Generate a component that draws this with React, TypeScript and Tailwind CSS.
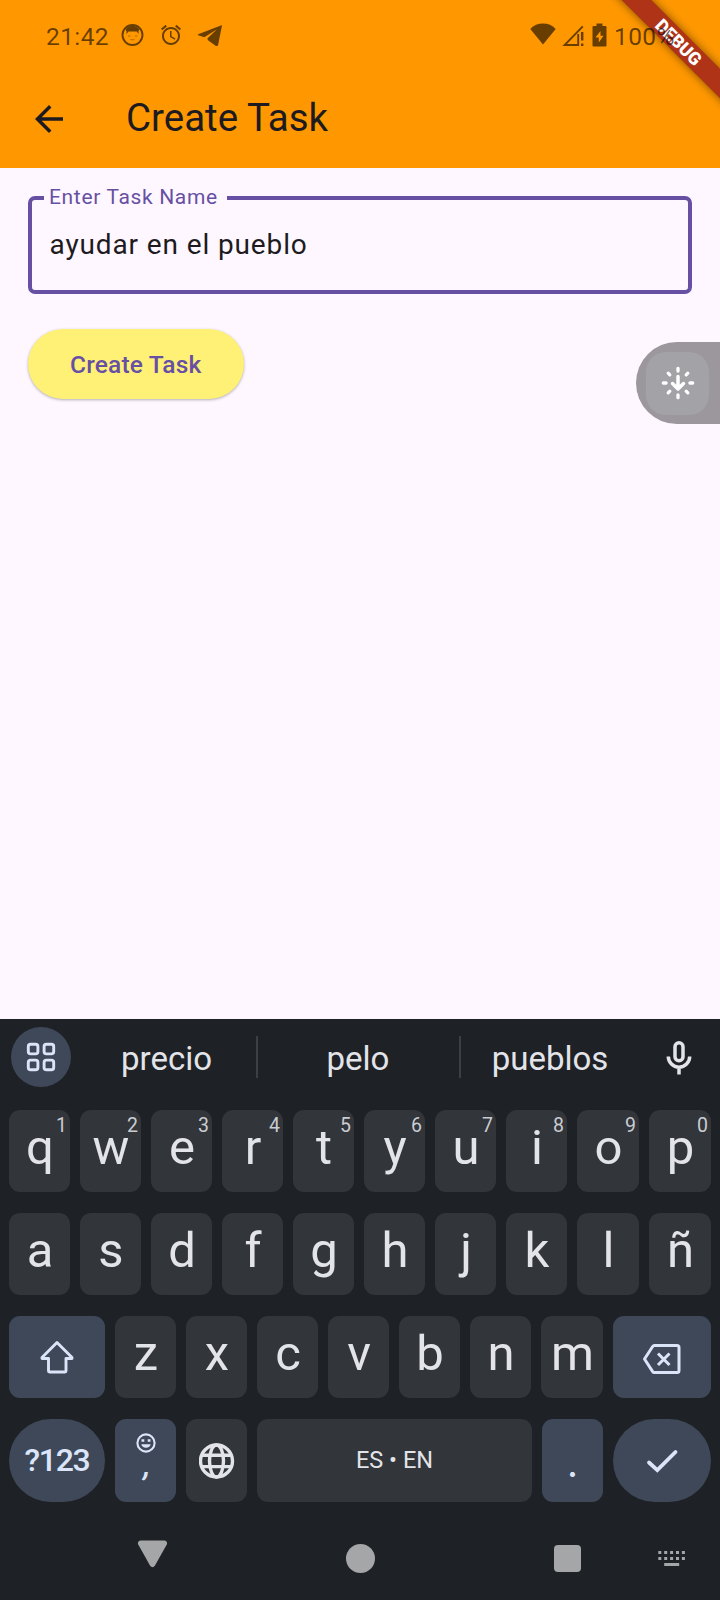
import React from "react";

const numberRow = ["q", "w", "e", "r", "t", "y", "u", "i", "o", "p"];
const homeRow = ["a", "s", "d", "f", "g", "h", "j", "k", "l", "ñ"];
const lowerRow = ["z", "x", "c", "v", "b", "n", "m"];

function Key({ label, hint }: { label: string; hint?: string }) {
  return (
    <div className="relative h-[82px] rounded-[11px] bg-[#32353a] pl-[1px] text-center text-[49px] leading-[76px] text-[#e3e4e9]">
      {label}
      {hint && (
        <span className="absolute top-[6px] right-[3px] text-[19.5px] leading-[20px] text-[#c9ccd1]">{hint}</span>
      )}
    </div>
  );
}

function StatusBar() {
  return (
    <div className="relative z-20 flex h-[70px] items-center pt-[3px] pl-[46px] text-[24.5px] leading-[30px] tracking-[0.4px] text-[#00000098]">
      <span className="w-[75px]">21:42</span>
      <svg width="24" height="24" viewBox="0 0 24 24" className="-mt-[3px]">
        <circle cx="11.500" cy="12" r="10" fill="none" stroke="currentColor" strokeWidth="1.900" />
        <path d="M4.400 6.400Q7.500 2.900 11.500 2.900T18.600 6.400L17.500 8V11L15.800 8.500H7.500L5.500 11V8Z" fill="currentColor" />
        <path d="M7 13h2.500M14 13h2.500M9.500 16.500q2 .8 4 0" fill="none" stroke="currentColor" strokeWidth=".8" opacity=".6" />
      </svg>
      <svg width="24" height="24" viewBox="0 0 24 24" className="-mt-[3px] ml-[14px]">
        <path fill="currentColor" d="m22 5.720-4.600-3.860-1.290 1.530 4.600 3.860L22 5.720zM7.880 3.390 6.600 1.860 2 5.710l1.290 1.530 4.590-3.850zM12.500 8H11v6l4.750 2.850.75-1.230-4-2.370V8zM12 4c-4.970 0-9 4.030-9 9s4.020 9 9 9c4.970 0 9-4.030 9-9s-4.030-9-9-9zm0 16c-3.870 0-7-3.130-7-7s3.130-7 7-7 7 3.130 7 7-3.130 7-7 7z" />
      </svg>
      <svg width="26" height="24" viewBox="0 0 26 24" className="-mt-[1px] ml-[14px]">
        <path fill="currentColor" d="M24.500 1.200 1.200 10.200Q.3 10.700 1.200 11.300L7.300 13.300 20 5.300 10.300 14.500 11 16.200 18.600 21.700Q20.500 22.800 21.100 21L24.900 2Q25 1.100 24.500 1.200Z" />
      </svg>
      <svg width="26" height="22" viewBox="0 0 26 22" className="-mt-[5px] ml-[307px]">
        <path fill="currentColor" d="M13 21.500.3 6Q5.500.6 13 .6T25.700 6Z" />
      </svg>
      <svg width="23" height="22" viewBox="0 0 23 22" className="-mt-[1px] ml-[6px]">
        <path fill="none" stroke="currentColor" strokeWidth="1.900" d="M20.800 1.300 2.600 20H16.200V9" />
        <path fill="currentColor" d="M19 7h2.400v8.500h-2.400zM19 18.500h2.400V21h-2.400z" />
      </svg>
      <svg width="15" height="24" viewBox="0 0 15 24" className="-mt-[3px] ml-[7px]">
        <path fill="currentColor" fillRule="evenodd" d="M4.500 .5h6V3H13.500Q14.500 3 14.500 4V22.500Q14.500 23.500 13.500 23.500H1.500Q.5 23.500 .5 22.500V4Q.5 3 1.500 3H4.500ZM8.500 8 3.500 14.500H6.800V19.500L11.500 12.700H8.500Z" />
      </svg>
      <span className="ml-[7px]">100%</span>
    </div>
  );
}

function DebugBanner() {
  return (
    <div className="absolute top-0 right-0 z-10 h-[168px] w-[168px] overflow-hidden">
      <div className="absolute top-[31px] left-[26px] h-[21px] w-[200px] rotate-45 bg-[#ae3317] pl-[2px] text-center text-[17.850px] leading-[21px] font-black text-white shadow-[0_0_10px_rgba(0,0,0,0.5)]">
        DEBUG
      </div>
    </div>
  );
}

function Header() {
  return (
    <header className="relative h-[168px] bg-[#ff9800]">
      <StatusBar />
      <div className="flex h-[98px] items-center pl-[28px]">
        <svg width="42" height="42" viewBox="0 0 24 24">
          <path fill="#1d1b20" d="M20 11H7.830l5.590-5.590L12 4l-8 8 8 8 1.410-1.410L7.830 13H20v-2z" />
        </svg>
        <h1 className="ml-[56px] -mt-[3px] text-[38.5px] leading-[49px] text-[#1d1b20]">Create Task</h1>
      </div>
      <DebugBanner />
    </header>
  );
}

function TaskForm() {
  return (
    <main className="relative h-[851px] px-[28px] pt-[28px]">
      <div className="relative h-[98px] rounded-[7px] border-4 border-[#6750a4] pt-[27px] pl-[17.5px]">
        <label className="absolute -top-[16px] left-[12px] bg-[#fef7ff] pr-[9px] pl-[5px] text-[21px] leading-[26px] tracking-[0.66px] text-[#6750a4]">
          Enter Task Name
        </label>
        <div className="text-[28px] leading-[36px] tracking-[0.875px] text-[#1d1b20]">ayudar en el pueblo</div>
      </div>
      <button className="mt-[35px] flex h-[70px] w-[215.5px] items-center justify-center rounded-full bg-[#fff176] pt-[2px] text-[24.5px] font-medium tracking-[0.175px] text-[#6750a4] shadow-[0_1px_3px_rgba(0,0,0,0.3)]">
        Create Task
      </button>
      <div className="absolute top-[174px] right-0 flex h-[82px] w-[84px] items-center rounded-l-full bg-[#9c979c] pl-[10px]">
        <div className="flex h-[63px] w-[63px] items-center justify-center rounded-[20px] bg-[#a3a2a7]">
          <svg width="34" height="34" viewBox="0 0 34 34" fill="none" stroke="#fff" strokeLinecap="round">
            <path strokeWidth="3.300" d="M17 2.300v2.800M17 28.900v2.800M2.300 17h2.800M28.900 17h2.800M7.200 7.200l1.600 1.600M26.800 7.200l-1.600 1.600M7.200 26.800l1.600-1.600M26.800 26.800l-1.600-1.600" />
            <path strokeWidth="3.500" strokeLinejoin="round" d="M17 10.500v12M11.500 17.500l5.500 5.500 5.500-5.500" />
          </svg>
        </div>
      </div>
    </main>
  );
}

function Suggestions() {
  return (
    <div className="flex h-[91px] pt-[8px] pl-[11px] text-[33px] leading-[63px] text-[#e3e4e9]">
      <div className="flex h-[60px] w-[60px] items-center justify-center rounded-full bg-[#3e4858]">
        <svg width="30" height="30" viewBox="0 0 30 30" fill="none" stroke="#dbe5fa" strokeWidth="2.900">
          <rect x="2.300" y="2.300" width="9.600" height="9.600" rx="2.300" />
          <rect x="18.100" y="2.300" width="9.600" height="9.600" rx="2.300" />
          <rect x="2.300" y="18.100" width="9.600" height="9.600" rx="2.300" />
          <rect x="18.100" y="18.100" width="9.600" height="9.600" rx="2.300" />
        </svg>
      </div>
      <span className="ml-[6px] w-[179px] text-center">precio</span>
      <div className="mt-[9px] h-[42px] w-[2px] bg-[#3c3f44]" />
      <span className="w-[200px] text-center">pelo</span>
      <div className="mt-[9px] ml-[1px] h-[42px] w-[2px] bg-[#3c3f44]" />
      <span className="w-[178px] text-center">pueblos</span>
      <svg width="28" height="36" viewBox="0 0 28 36" className="mt-[13px] ml-[26px]" fill="none" stroke="#e3e4e9" strokeWidth="3.500">
        <rect x="10" y="2.800" width="8" height="18" rx="4" />
        <path d="M3.300 16.500a10.700 10.700 0 0 0 21.400 0M14 27.500V34.500" />
      </svg>
    </div>
  );
}

function Keyboard() {
  return (
    <section className="flex h-[581px] flex-col bg-[#1e2125]">
      <Suggestions />
      <div className="flex flex-col gap-[21px] px-[9px]">
        <div className="grid grid-cols-[repeat(8,61px)_62px_62px] gap-[10px]">
          {numberRow.map((k, i) => (
            <Key key={k} label={k} hint={String((i + 1) % 10)} />
          ))}
        </div>
        <div className="grid grid-cols-[repeat(8,61px)_62px_62px] gap-[10px]">
          {homeRow.map((k) => (
            <Key key={k} label={k} />
          ))}
        </div>
        <div className="grid grid-cols-[96px_repeat(6,61px)_62px_98px] gap-[10px]">
          <div className="flex h-[82px] items-center justify-center rounded-[11px] bg-[#3e4858]">
            <svg width="36" height="36" viewBox="0 0 36 36" fill="none" stroke="#dbe5fa" strokeWidth="2.900" strokeLinejoin="round">
              <path d="M18 3.500 33 18.500V19.500H27V32Q27 33 26 33H10.500Q9.500 33 9.500 32V19.500H3V18.500Z" />
            </svg>
          </div>
          {lowerRow.map((k) => (
            <Key key={k} label={k} />
          ))}
          <div className="flex h-[82px] items-center justify-center rounded-[11px] bg-[#3e4858]">
            <svg width="40" height="32" viewBox="0 0 40 32" className="mt-[3px]" fill="none" stroke="#dbe5fa" strokeWidth="3">
              <path strokeLinejoin="round" d="M12.500 2.500H35Q37 2.500 37 4.500V27.500Q37 29.500 35 29.500H12.500Q11.300 29.500 10.500 28.300L2.500 16 10.500 3.700Q11.300 2.500 12.500 2.500Z" />
              <path d="m16 10.500 11.500 11.500M27.500 10.500 16 22" />
            </svg>
          </div>
        </div>
        <div className="grid h-[83px] grid-cols-[96px_61px_61px_275px_61px_98px] grid-rows-[83px] gap-[10px]">
          <div className="rounded-full bg-[#3e4858] text-center text-[32px] leading-[83px] font-medium tracking-[-1.300px] text-[#dbe5fa]">?123</div>
          <div className="flex flex-col items-center rounded-[11px] bg-[#3e4858] pt-[13px] text-[#dbe5fa]">
            <svg width="22" height="22" viewBox="0 0 22 22">
              <circle cx="11" cy="11" r="8.600" fill="none" stroke="currentColor" strokeWidth="2.100" />
              <path d="M6.500 7.200h2.800v2.600H6.500zM12.700 7.200h2.800v2.600h-2.800z" fill="currentColor" />
              <path d="M6.300 12.300h9.400a4.800 4.200 0 0 1-9.400 0Z" fill="currentColor" />
            </svg>
            <span className="-mt-[1px] pl-[3px] text-[32px] leading-[24px] font-medium italic">,</span>
          </div>
          <div className="flex items-center justify-center rounded-[11px] bg-[#32353a]">
            <svg width="36" height="36" viewBox="0 0 36 36" fill="none" stroke="#e3e4e9" strokeWidth="3.400">
              <circle cx="17.500" cy="18" r="16" />
              <ellipse cx="17.500" cy="18" rx="7" ry="16" />
              <path d="M2.500 12.200h30M2.500 23.600h30" />
            </svg>
          </div>
          <div className="rounded-[11px] bg-[#32353a] text-center text-[23.5px] leading-[83px] text-[#e3e4e9]">ES • EN</div>
          <div className="rounded-[11px] bg-[#3e4858] text-center font-['Lato',sans-serif] text-[40px] leading-[87px] text-[#dbe5fa]">.</div>
          <div className="flex items-center justify-center rounded-full bg-[#3e4858]">
            <svg width="34" height="26" viewBox="0 0 34 26" fill="none" stroke="#dbe5fa" strokeWidth="3.800">
              <path strokeLinecap="round" d="m4 14.500 8.300 7.700L30.500 4" />
            </svg>
          </div>
        </div>
      </div>
      <nav className="flex flex-1 items-start pt-[37px] pl-[137px]">
        <svg width="31" height="30" viewBox="0 0 31 30">
          <path fill="#a5a6a8" d="M3.500 1.500H27.500Q31 2.300 29.800 5.500L18 26.500Q15.500 30 13 26.500L1.200 5.500Q0 2.300 3.500 1.500Z" />
        </svg>
        <div className="mt-[5px] ml-[178px] h-[29px] w-[29px] rounded-full bg-[#a5a6a8]" />
        <div className="mt-[6px] ml-[179px] h-[27px] w-[27px] rounded-[4px] bg-[#a5a6a8]" />
        <svg width="28" height="16" viewBox="0 0 28 16" className="mt-[12px] ml-[77px]" fill="#a5a6a8">
          {[0, 1, 2, 3, 4].map((c) => (
            <g key={c}>
              <rect x={0.3 + c * 5.9} y="0" width="3" height="3" />
              <rect x={0.3 + c * 5.9} y="6" width="3" height="3" />
            </g>
          ))}
          <rect x="6.200" y="12" width="15" height="3" />
        </svg>
      </nav>
    </section>
  );
}

export default function App() {
  return (
    <div className="h-[1600px] w-[720px] overflow-hidden bg-[#fef7ff] font-['Roboto',sans-serif]">
      <Header />
      <TaskForm />
      <Keyboard />
    </div>
  );
}
